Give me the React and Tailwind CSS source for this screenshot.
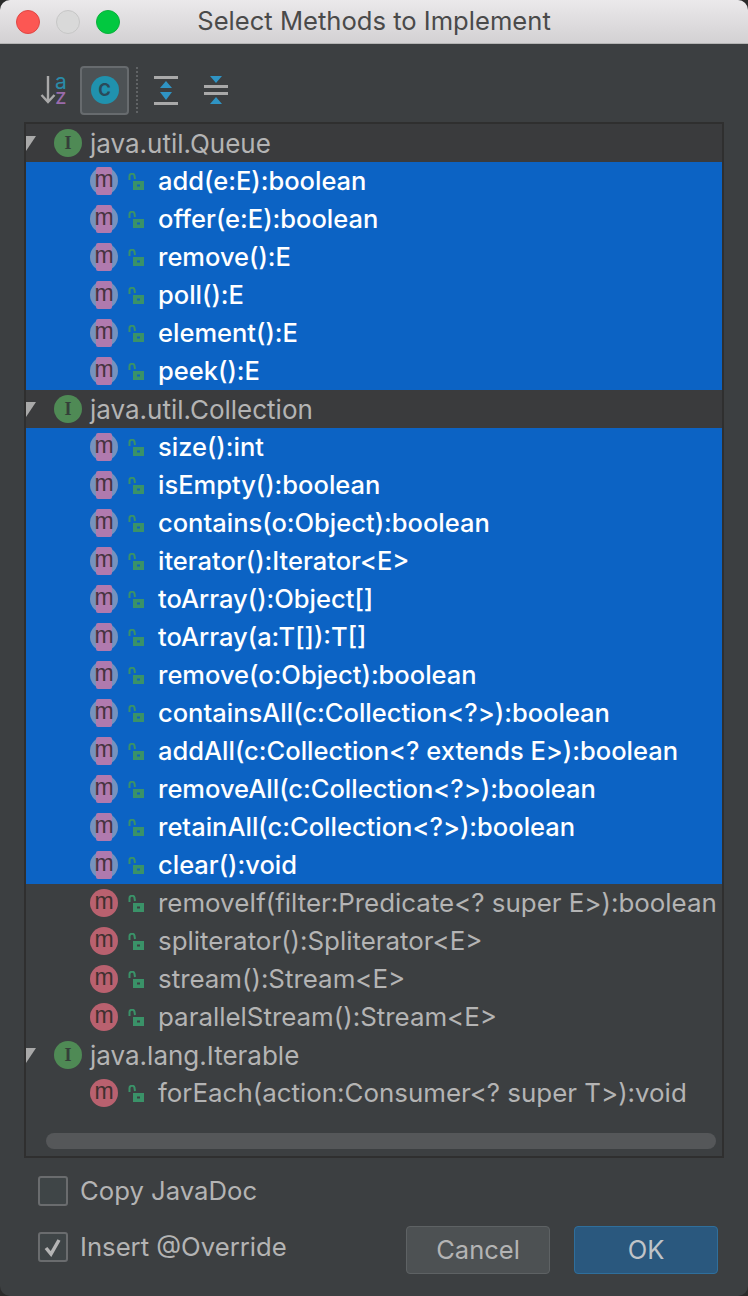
// App.jsx
const queueMethods = ['add(e:E):boolean', 'offer(e:E):boolean', 'remove():E', 'poll():E', 'element():E', 'peek():E'];
const collectionMethods = [
  'size():int',
  'isEmpty():boolean',
  'contains(o:Object):boolean',
  'iterator():Iterator<E>',
  'toArray():Object[]',
  'toArray(a:T[]):T[]',
  'remove(o:Object):boolean',
  'containsAll(c:Collection<?>):boolean',
  'addAll(c:Collection<? extends E>):boolean',
  'removeAll(c:Collection<?>):boolean',
  'retainAll(c:Collection<?>):boolean',
  'clear():void',
];
const otherMethods = [
  'removeIf(filter:Predicate<? super E>):boolean',
  'spliterator():Spliterator<E>',
  'stream():Stream<E>',
  'parallelStream():Stream<E>',
];

const LockIcon = () => (
  <svg width="16" height="18" viewBox="0 0 16 18" className="shrink-0">
    <path d="M1.5 7 V3.5 A2.5 2.5 0 0 1 6.5 3 L7 6" fill="none" stroke="#3a9268" strokeWidth="2" />
    <path fillRule="evenodd" d="M5 8 H16 V17 H5 Z M9 11.5 V13.5 H12 V11.5 Z" fill="#3a9268" />
  </svg>
);

const MethodIcon = ({ selected }) =>
  selected ? (
    <div className="relative w-[28px] h-[28px] rounded-full bg-[#7692bd] shrink-0 flex items-center justify-center">
      <div className="absolute left-[6px] top-0 w-[16px] h-[28px] rounded-[2px] bg-[#b07aae]" />
      <span className="relative text-[23px] leading-none text-[#46333f] font-['Liberation_Sans',sans-serif] -mt-[3px]">m</span>
    </div>
  ) : (
    <div className="w-[28px] h-[28px] rounded-full bg-[#b9616f] shrink-0 flex items-center justify-center">
      <span className="text-[23px] leading-none text-[#40302f] font-['Liberation_Sans',sans-serif] -mt-[3px]">m</span>
    </div>
  );

const MethodRow = ({ label, selected }) => (
  <div className={`h-[38px] flex items-center pl-[64px] ${selected ? 'bg-[#0c63c4]' : ''}`}>
    <MethodIcon selected={selected} />
    <div className="ml-[10px] mt-[2px]"><LockIcon /></div>
    <span className={`ml-[14px] whitespace-nowrap ${selected ? 'text-[25.5px] text-white font-medium' : 'text-[25.9px] text-[#b4b4b4]'}`}>{label}</span>
  </div>
);

const GroupRow = ({ label, dark }) => (
  <div className={`h-[38px] flex items-center ${dark ? 'bg-[#3a3b3d]' : ''}`}>
    <svg width="10" height="15" viewBox="0 0 10 15" className="shrink-0">
      <path d="M0 0 H10 L0 15 Z" fill="#a9a9a9" />
    </svg>
    <div className="ml-[18px] w-[28px] h-[28px] rounded-full bg-[#4f8a55] shrink-0 flex items-center justify-center">
      <span className="text-[18px] leading-none font-bold text-[#35403a] font-['Liberation_Serif',serif]">I</span>
    </div>
    <span className="ml-[8px] whitespace-nowrap text-[26px] text-[#b4b4b4]">{label}</span>
  </div>
);

const Checkbox = ({ checked, label }) => (
  <div className="flex items-center h-[30px]">
    <div className="w-[30px] h-[30px] rounded-[3px] border-2 border-[#6a6c6e] bg-[#3f4547] flex items-center justify-center">
      {checked && (
        <svg width="20" height="20" viewBox="0 0 20 20">
          <path d="M3 11 L8 17 L16 3" fill="none" stroke="#b4b4b4" strokeWidth="3.5" />
        </svg>
      )}
    </div>
    <span className="ml-[12px] text-[25.7px] text-[#b4b4b4]">{label}</span>
  </div>
);

export default function App() {
  return (
    <div className="w-[748px] h-[1296px] bg-[#2b2b2b] overflow-hidden font-['Inter','Liberation_Sans',sans-serif]">
      <div className="h-full rounded-[10px] overflow-hidden bg-[#3c3f41] flex flex-col">
        {/* title bar */}
        <div className="relative h-[44px] shrink-0 flex items-center justify-center bg-gradient-to-b from-[#ebe9eb] to-[#d3d1d3] border-b border-[#b4b4b4]">
          <div className="absolute left-[16px] top-[10px] flex gap-[16px]">
            <div className="w-[24px] h-[24px] rounded-full bg-[#fc5753] border border-[#df4744]" />
            <div className="w-[24px] h-[24px] rounded-full bg-[#d9d9d9] border border-[#c6c6c6]" />
            <div className="w-[24px] h-[24px] rounded-full bg-[#02c840] border border-[#0cb03c]" />
          </div>
          <span className="text-[25.6px] text-[#4a4a4a]">Select Methods to Implement</span>
        </div>

        {/* toolbar */}
        <div className="h-[78px] shrink-0 flex items-center pl-[40px] pt-[14px]">
          <div className="relative w-[28px] h-[30px] shrink-0">
            <svg width="16" height="28" viewBox="0 0 16 28" className="mt-[1px]">
              <path d="M8 0 V26 M1.5 19 L8 26 L14.5 19" fill="none" stroke="#a9a9a9" strokeWidth="2.4" />
            </svg>
            <span className="absolute left-[15px] top-0 text-[21px] leading-[14px] text-[#2a8ba8]">a</span>
            <span className="absolute left-[15px] top-[15px] text-[21px] leading-[14px] text-[#9a6bab]">z</span>
          </div>
          <div className="ml-[12px] w-[49px] h-[49px] rounded-[4px] border-2 border-[#676b6e] bg-[#4d5255] flex items-center justify-center shrink-0">
            <div className="w-[28px] h-[28px] rounded-full bg-[#2092ae] flex items-center justify-center">
              <span className="text-[17px] leading-none font-bold text-[#2a4a5a]">C</span>
            </div>
          </div>
          <div className="ml-[7px] h-[46px] border-l-2 border-dotted border-[#606365]" />
          <svg width="26" height="30" viewBox="0 0 26 30" className="ml-[15px] shrink-0">
            <rect x="1" y="1" width="24" height="3" fill="#a9a9a9" />
            <rect x="1" y="27" width="24" height="3" fill="#a9a9a9" />
            <path d="M13 6 L19 13 H7 Z M7 17 H19 L13 25 Z" fill="#2f94c4" />
          </svg>
          <svg width="26" height="30" viewBox="0 0 26 30" className="ml-[24px] shrink-0">
            <rect x="1" y="10" width="24" height="3" fill="#a9a9a9" />
            <rect x="1" y="17" width="24" height="3" fill="#a9a9a9" />
            <path d="M7 1 H19 L13 8 Z M13 22 L19 29 H7 Z" fill="#2f94c4" />
          </svg>
        </div>

        {/* tree */}
        <div className="mx-[24px] h-[1036px] shrink-0 border-2 border-[#2f2f2f] flex flex-col overflow-hidden">
          <GroupRow label="java.util.Queue" dark />
          {queueMethods.map((m) => (
            <MethodRow key={m} label={m} selected />
          ))}
          <GroupRow label="java.util.Collection" dark />
          {collectionMethods.map((m, i) => (
            <MethodRow key={i} label={m} selected />
          ))}
          {otherMethods.map((m) => (
            <MethodRow key={m} label={m} />
          ))}
          <GroupRow label="java.lang.Iterable" />
          <MethodRow label="forEach(action:Consumer<? super T>):void" />
          <div className="mt-[21px] ml-[20px] mr-[6px] h-[16px] rounded-full bg-[#555759]" />
        </div>

        {/* footer */}
        <div className="relative flex-1 pl-[38px] pt-[18px]">
          <div className="flex flex-col gap-[26px]">
            <Checkbox label="Copy JavaDoc" />
            <Checkbox label="Insert @Override" checked />
          </div>
          <div className="absolute right-[30px] bottom-[22px] flex gap-[24px]">
            <button className="w-[144px] h-[48px] rounded-[4px] border border-[#5e6264] bg-[#4d5153] text-[25.5px] text-[#b4b4b4]">Cancel</button>
            <button className="w-[144px] h-[48px] rounded-[4px] border border-[#2f6f9c] bg-[#2a587e] text-[25.5px] text-[#c0c4c8]">OK</button>
          </div>
        </div>
      </div>
    </div>
  );
}
